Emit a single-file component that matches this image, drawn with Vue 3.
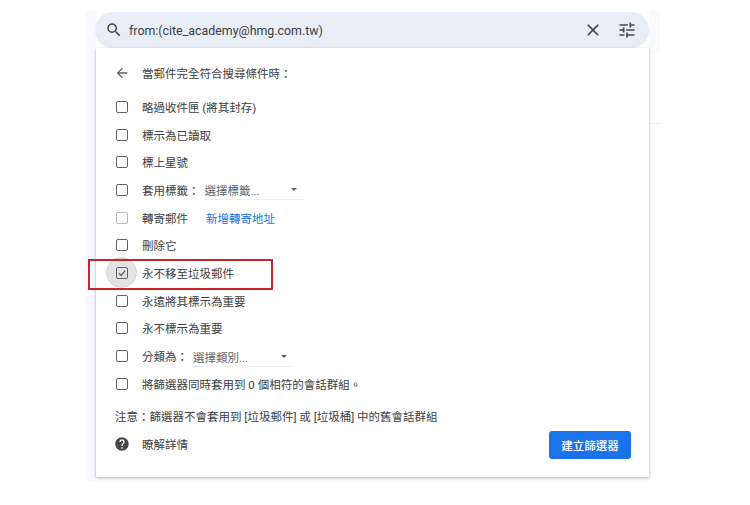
<template>
  <div class="page">
    <div class="gmail">
      <span class="divider"></span>
      <div class="search">
        <svg class="search-icon" viewBox="0 0 24 24" width="18" height="18">
          <path d="M15.5 14h-.79l-.28-.27A6.47 6.47 0 0 0 16 9.5 6.5 6.5 0 1 0 9.5 16c1.61 0 3.09-.59 4.23-1.57l.27.28v.79l5 4.99L20.49 19l-4.99-5zm-6 0C7.01 14 5 11.99 5 9.5S7.01 5 9.5 5 14 7.01 14 9.5 11.99 14 9.5 14z" />
        </svg>
        <span class="query">from:(cite_academy@hmg.com.tw)</span>
        <svg class="close-icon" viewBox="0 0 24 24" width="20" height="20">
          <path d="M19 6.41 17.59 5 12 10.59 6.41 5 5 6.41 10.59 12 5 17.59 6.41 19 12 13.41 17.59 19 19 17.59 13.41 12z" />
        </svg>
        <svg class="tune-icon" viewBox="0 0 24 24" width="20" height="20">
          <path d="M3 17v2h6v-2H3zM3 5v2h10V5H3zm10 16v-2h8v-2h-8v-2h-2v6h2zM7 9v2H3v2h4v2h2V9H7zm14 4v-2H11v2h10zm-6-4h2V7h4V5h-4V3h-2v6z" />
        </svg>
      </div>

      <div class="panel">
        <div class="panel-head">
          <svg class="back-icon" viewBox="0 0 24 24" width="16" height="16">
            <path d="M20 11H7.83l5.59-5.59L12 4l-8 8 8 8 1.41-1.41L7.83 13H20v-2z" />
          </svg>
          <span>當郵件完全符合搜尋條件時：</span>
        </div>

        <div class="options">
          <div v-for="opt in options" :key="opt.label" class="option">
            <span class="box-wrap">
              <span v-if="opt.checked" class="ripple"></span>
              <span class="box" :class="{ muted: opt.muted }">
                <svg v-if="opt.checked" viewBox="0 0 12 12" width="10" height="10">
                  <path d="M2.2 6.2 5 9l4.8-5.8" />
                </svg>
              </span>
            </span>
            <span class="label">{{ opt.label }}</span>
            <a v-if="opt.link" class="link">{{ opt.link }}</a>
            <span v-if="opt.select" class="select" :class="opt.select.cls">
              <span>{{ opt.select.text }}</span>
              <span class="caret"></span>
            </span>
            <span v-if="opt.checked" class="red-frame"></span>
          </div>
        </div>

        <p class="note">注意：篩選器不會套用到 [垃圾郵件] 或 [垃圾桶] 中的舊會話群組</p>

        <div class="panel-foot">
          <div class="help">
            <svg viewBox="0 0 24 24" width="16" height="16">
              <path d="M12 2C6.48 2 2 6.48 2 12s4.48 10 10 10 10-4.48 10-10S17.52 2 12 2zm1 17h-2v-2h2v2zm2.07-7.75-.9.92C13.45 12.9 13 13.5 13 15h-2v-.5c0-1.1.45-2.1 1.17-2.83l1.24-1.26c.37-.36.59-.86.59-1.41 0-1.1-.9-2-2-2s-2 .9-2 2H8c0-2.21 1.79-4 4-4s4 1.79 4 4c0 .88-.36 1.68-.93 2.25z" />
            </svg>
            <span>瞭解詳情</span>
          </div>
          <button class="create">建立篩選器</button>
        </div>
      </div>
    </div>
  </div>
</template>

<script setup>
const options = [
  { label: '略過收件匣 (將其封存)' },
  { label: '標示為已讀取' },
  { label: '標上星號' },
  { label: '套用標籤：', select: { text: '選擇標籤...', cls: 'select-label' } },
  { label: '轉寄郵件', link: '新增轉寄地址', muted: true },
  { label: '刪除它' },
  { label: '永不移至垃圾郵件', checked: true },
  { label: '永遠將其標示為重要' },
  { label: '永不標示為重要' },
  { label: '分類為：', select: { text: '選擇類別...', cls: 'select-category' } },
  { label: '將篩選器同時套用到 0 個相符的會話群組。' },
]
</script>

<style>
html,
body {
  background: #fff;
}
</style>

<style scoped>
.page {
  width: 750px;
  height: 505px;
  padding: 10px 0 0 85px;
  box-sizing: border-box;
  overflow: hidden;
  font-family: Roboto, "Liberation Sans", "Noto Sans CJK TC", sans-serif;
  color: #3c4043;
}

.gmail {
  position: relative;
  width: 575px;
  height: 471px;
  padding: 2px 11px 0 10px;
  box-sizing: border-box;
  background: linear-gradient(to right, #f8fafd 11px, #fff 11px);
}

.gmail::before {
  content: "";
  position: absolute;
  top: 0;
  right: 0;
  width: 11px;
  height: 44px;
  background: #f8fafd;
}

.divider {
  position: absolute;
  top: 113px;
  right: 0;
  width: 11px;
  height: 1px;
  background: #eceff1;
}

.search {
  display: flex;
  align-items: center;
  height: 36px;
  padding: 0 12px 0 10px;
  background: #e9eef6;
  border-radius: 18px;
  position: relative;
}

.search svg {
  fill: #444746;
  flex: none;
}

.query {
  margin-left: 6px;
  flex: 1;
  font-size: 12.4px;
  color: #3c4043;
}

.close-icon {
  margin-right: 14px;
}

.panel {
  position: relative;
  height: 429px;
  margin-left: 1px;
  padding: 0 18px 0 19px;
  box-sizing: border-box;
  background: #fff;
  box-shadow: 0 1px 3px rgba(60, 64, 67, 0.4);
  font-size: 11.5px;
  color: #3c4043;
}

.panel-head {
  display: flex;
  align-items: center;
  height: 45px;
  padding-top: 4px;
  box-sizing: border-box;
  gap: 12px;
  margin-left: -1px;
}

.back-icon {
  fill: #5f6368;
  flex: none;
}

.options {
  display: flex;
  flex-direction: column;
}

.option {
  position: relative;
  display: flex;
  align-items: center;
  height: 27.7px;
}

.box-wrap {
  position: relative;
  display: flex;
  align-items: center;
  justify-content: center;
  width: 13px;
  height: 13px;
  margin-right: 14px;
  flex: none;
}

.ripple {
  position: absolute;
  left: -9px;
  top: -9px;
  width: 31px;
  height: 31px;
  border-radius: 50%;
  background: #e3e3e3;
  border: 1px solid #d5d5d5;
  box-sizing: border-box;
}

.box {
  position: relative;
  display: flex;
  align-items: center;
  justify-content: center;
  width: 12px;
  height: 12px;
  box-sizing: border-box;
  border: 1.6px solid #5f6368;
  border-radius: 2px;
}

.box.muted {
  border-color: #b5b7ba;
}

.box svg {
  fill: none;
  stroke: #5f6368;
  stroke-width: 1.6;
}

.link {
  margin-left: 18px;
  color: #1a73e8;
}

.select {
  position: relative;
  display: flex;
  align-items: center;
  height: 18px;
  margin-top: 2px;
  margin-left: 5px;
  color: #5f6368;
  border-bottom: 1px solid #eceef0;
}

.select-label {
  width: 98px;
}

.select-category {
  width: 100px;
}

.caret {
  position: absolute;
  right: 6px;
  top: 7px;
  border-left: 3px solid transparent;
  border-right: 3px solid transparent;
  border-top: 3px solid #5f6368;
}

.red-frame {
  position: absolute;
  left: -27px;
  top: 0;
  width: 185px;
  height: 31px;
  box-sizing: border-box;
  border: 2px solid #c8242b;
  pointer-events: none;
}

.note {
  margin: 10px 0 0 0;
}

.panel-foot {
  display: flex;
  align-items: flex-start;
  justify-content: space-between;
  margin-top: 10px;
}

.help {
  display: flex;
  align-items: center;
  gap: 12px;
  height: 20px;
  margin-left: -1px;
}

.help svg {
  fill: #444746;
  flex: none;
}

.create {
  width: 82px;
  height: 28px;
  margin-top: -3px;
  border: 0;
  border-radius: 3px;
  background: #1a73e8;
  color: #fff;
  font: 500 11.5px Roboto, "Noto Sans CJK TC", sans-serif;
}
</style>
